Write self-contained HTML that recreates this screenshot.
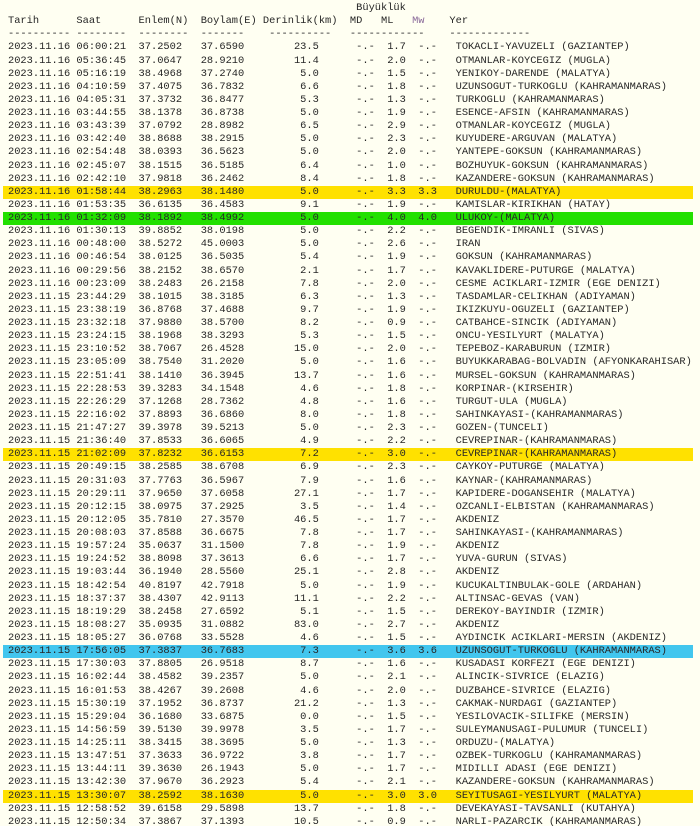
<!DOCTYPE html>
<html><head><meta charset="utf-8"><style>
html,body{margin:0;padding:0;background:#fffff2;width:700px;height:826px;overflow:hidden}
pre{margin:0;padding:2px 0 0 8px;font-family:"Liberation Mono",monospace;font-size:10.37px;line-height:13.12px;color:#262626}
.h{display:block;margin-left:-5px;padding-left:5px;width:685px}
.y{background:#ffe100}.g{background:#22e000}.b{background:#42c6ee}
.mw{color:#8a6a9a}
</style></head><body><pre>                                                        Büyüklük
Tarih      Saat      Enlem(N)  Boylam(E) Derinlik(km)  MD   ML   <span class="mw">Mw</span>    Yer
---------- --------  --------  -------    ----------   ------------    -------------
2023.11.16 06:00:21  37.2502   37.6590        23.5      -.-  1.7  -.-   TOKACLI-YAVUZELI (GAZIANTEP)
2023.11.16 05:36:45  37.0647   28.9210        11.4      -.-  2.0  -.-   OTMANLAR-KOYCEGIZ (MUGLA)
2023.11.16 05:16:19  38.4968   37.2740         5.0      -.-  1.5  -.-   YENIKOY-DARENDE (MALATYA)
2023.11.16 04:10:59  37.4075   36.7832         6.6      -.-  1.8  -.-   UZUNSOGUT-TURKOGLU (KAHRAMANMARAS)
2023.11.16 04:05:31  37.3732   36.8477         5.3      -.-  1.3  -.-   TURKOGLU (KAHRAMANMARAS)
2023.11.16 03:44:55  38.1378   36.8738         5.0      -.-  1.9  -.-   ESENCE-AFSIN (KAHRAMANMARAS)
2023.11.16 03:43:39  37.0792   28.8982         6.5      -.-  2.9  -.-   OTMANLAR-KOYCEGIZ (MUGLA)
2023.11.16 03:42:40  38.8688   38.2915         5.0      -.-  2.3  -.-   KUYUDERE-ARGUVAN (MALATYA)
2023.11.16 02:54:48  38.0393   36.5623         5.0      -.-  2.0  -.-   YANTEPE-GOKSUN (KAHRAMANMARAS)
2023.11.16 02:45:07  38.1515   36.5185         6.4      -.-  1.0  -.-   BOZHUYUK-GOKSUN (KAHRAMANMARAS)
2023.11.16 02:42:10  37.9818   36.2462         8.4      -.-  1.8  -.-   KAZANDERE-GOKSUN (KAHRAMANMARAS)
<span class="h y">2023.11.16 01:58:44  38.2963   38.1480         5.0      -.-  3.3  3.3   DURULDU-(MALATYA)</span>2023.11.16 01:53:35  36.6135   36.4583         9.1      -.-  1.9  -.-   KAMISLAR-KIRIKHAN (HATAY)
<span class="h g">2023.11.16 01:32:09  38.1892   38.4992         5.0      -.-  4.0  4.0   ULUKOY-(MALATYA)</span>2023.11.16 01:30:13  39.8852   38.0198         5.0      -.-  2.2  -.-   BEGENDIK-IMRANLI (SIVAS)
2023.11.16 00:48:00  38.5272   45.0003         5.0      -.-  2.6  -.-   IRAN
2023.11.16 00:46:54  38.0125   36.5035         5.4      -.-  1.9  -.-   GOKSUN (KAHRAMANMARAS)
2023.11.16 00:29:56  38.2152   38.6570         2.1      -.-  1.7  -.-   KAVAKLIDERE-PUTURGE (MALATYA)
2023.11.16 00:23:09  38.2483   26.2158         7.8      -.-  2.0  -.-   CESME ACIKLARI-IZMIR (EGE DENIZI)
2023.11.15 23:44:29  38.1015   38.3185         6.3      -.-  1.3  -.-   TASDAMLAR-CELIKHAN (ADIYAMAN)
2023.11.15 23:38:19  36.8768   37.4688         9.7      -.-  1.9  -.-   IKIZKUYU-OGUZELI (GAZIANTEP)
2023.11.15 23:32:18  37.9880   38.5700         8.2      -.-  0.9  -.-   CATBAHCE-SINCIK (ADIYAMAN)
2023.11.15 23:24:15  38.1968   38.3293         5.3      -.-  1.5  -.-   ONCU-YESILYURT (MALATYA)
2023.11.15 23:10:52  38.7067   26.4528        15.0      -.-  2.0  -.-   TEPEBOZ-KARABURUN (IZMIR)
2023.11.15 23:05:09  38.7540   31.2020         5.0      -.-  1.6  -.-   BUYUKKARABAG-BOLVADIN (AFYONKARAHISAR)
2023.11.15 22:51:41  38.1410   36.3945        13.7      -.-  1.6  -.-   MURSEL-GOKSUN (KAHRAMANMARAS)
2023.11.15 22:28:53  39.3283   34.1548         4.6      -.-  1.8  -.-   KORPINAR-(KIRSEHIR)
2023.11.15 22:26:29  37.1268   28.7362         4.8      -.-  1.6  -.-   TURGUT-ULA (MUGLA)
2023.11.15 22:16:02  37.8893   36.6860         8.0      -.-  1.8  -.-   SAHINKAYASI-(KAHRAMANMARAS)
2023.11.15 21:47:27  39.3978   39.5213         5.0      -.-  2.3  -.-   GOZEN-(TUNCELI)
2023.11.15 21:36:40  37.8533   36.6065         4.9      -.-  2.2  -.-   CEVREPINAR-(KAHRAMANMARAS)
<span class="h y">2023.11.15 21:02:09  37.8232   36.6153         7.2      -.-  3.0  -.-   CEVREPINAR-(KAHRAMANMARAS)</span>2023.11.15 20:49:15  38.2585   38.6708         6.9      -.-  2.3  -.-   CAYKOY-PUTURGE (MALATYA)
2023.11.15 20:31:03  37.7763   36.5967         7.9      -.-  1.6  -.-   KAYNAR-(KAHRAMANMARAS)
2023.11.15 20:29:11  37.9650   37.6058        27.1      -.-  1.7  -.-   KAPIDERE-DOGANSEHIR (MALATYA)
2023.11.15 20:12:15  38.0975   37.2925         3.5      -.-  1.4  -.-   OZCANLI-ELBISTAN (KAHRAMANMARAS)
2023.11.15 20:12:05  35.7810   27.3570        46.5      -.-  1.7  -.-   AKDENIZ
2023.11.15 20:08:03  37.8588   36.6675         7.8      -.-  1.7  -.-   SAHINKAYASI-(KAHRAMANMARAS)
2023.11.15 19:57:24  35.0637   31.1500         7.8      -.-  1.9  -.-   AKDENIZ
2023.11.15 19:24:52  38.8098   37.3613         6.6      -.-  1.7  -.-   YUVA-GURUN (SIVAS)
2023.11.15 19:03:44  36.1940   28.5560        25.1      -.-  2.8  -.-   AKDENIZ
2023.11.15 18:42:54  40.8197   42.7918         5.0      -.-  1.9  -.-   KUCUKALTINBULAK-GOLE (ARDAHAN)
2023.11.15 18:37:37  38.4307   42.9113        11.1      -.-  2.2  -.-   ALTINSAC-GEVAS (VAN)
2023.11.15 18:19:29  38.2458   27.6592         5.1      -.-  1.5  -.-   DEREKOY-BAYINDIR (IZMIR)
2023.11.15 18:08:27  35.0935   31.0882        83.0      -.-  2.7  -.-   AKDENIZ
2023.11.15 18:05:27  36.0768   33.5528         4.6      -.-  1.5  -.-   AYDINCIK ACIKLARI-MERSIN (AKDENIZ)
<span class="h b">2023.11.15 17:56:05  37.3837   36.7683         7.3      -.-  3.6  3.6   UZUNSOGUT-TURKOGLU (KAHRAMANMARAS)</span>2023.11.15 17:30:03  37.8805   26.9518         8.7      -.-  1.6  -.-   KUSADASI KORFEZI (EGE DENIZI)
2023.11.15 16:02:44  38.4582   39.2357         5.0      -.-  2.1  -.-   ALINCIK-SIVRICE (ELAZIG)
2023.11.15 16:01:53  38.4267   39.2608         4.6      -.-  2.0  -.-   DUZBAHCE-SIVRICE (ELAZIG)
2023.11.15 15:30:19  37.1952   36.8737        21.2      -.-  1.3  -.-   CAKMAK-NURDAGI (GAZIANTEP)
2023.11.15 15:29:04  36.1680   33.6875         0.0      -.-  1.5  -.-   YESILOVACIK-SILIFKE (MERSIN)
2023.11.15 14:56:59  39.5130   39.9978         3.5      -.-  1.7  -.-   SULEYMANUSAGI-PULUMUR (TUNCELI)
2023.11.15 14:25:11  38.3415   38.3695         5.0      -.-  1.3  -.-   ORDUZU-(MALATYA)
2023.11.15 13:47:51  37.3633   36.9722         3.8      -.-  1.7  -.-   OZBEK-TURKOGLU (KAHRAMANMARAS)
2023.11.15 13:44:11  39.3630   26.1943         5.0      -.-  1.7  -.-   MIDILLI ADASI (EGE DENIZI)
2023.11.15 13:42:30  37.9670   36.2923         5.4      -.-  2.1  -.-   KAZANDERE-GOKSUN (KAHRAMANMARAS)
<span class="h y">2023.11.15 13:30:07  38.2592   38.1630         5.0      -.-  3.0  3.0   SEYITUSAGI-YESILYURT (MALATYA)</span>2023.11.15 12:58:52  39.6158   29.5898        13.7      -.-  1.8  -.-   DEVEKAYASI-TAVSANLI (KUTAHYA)
2023.11.15 12:50:34  37.3867   37.1393        10.5      -.-  0.9  -.-   NARLI-PAZARCIK (KAHRAMANMARAS)
</pre></body></html>
